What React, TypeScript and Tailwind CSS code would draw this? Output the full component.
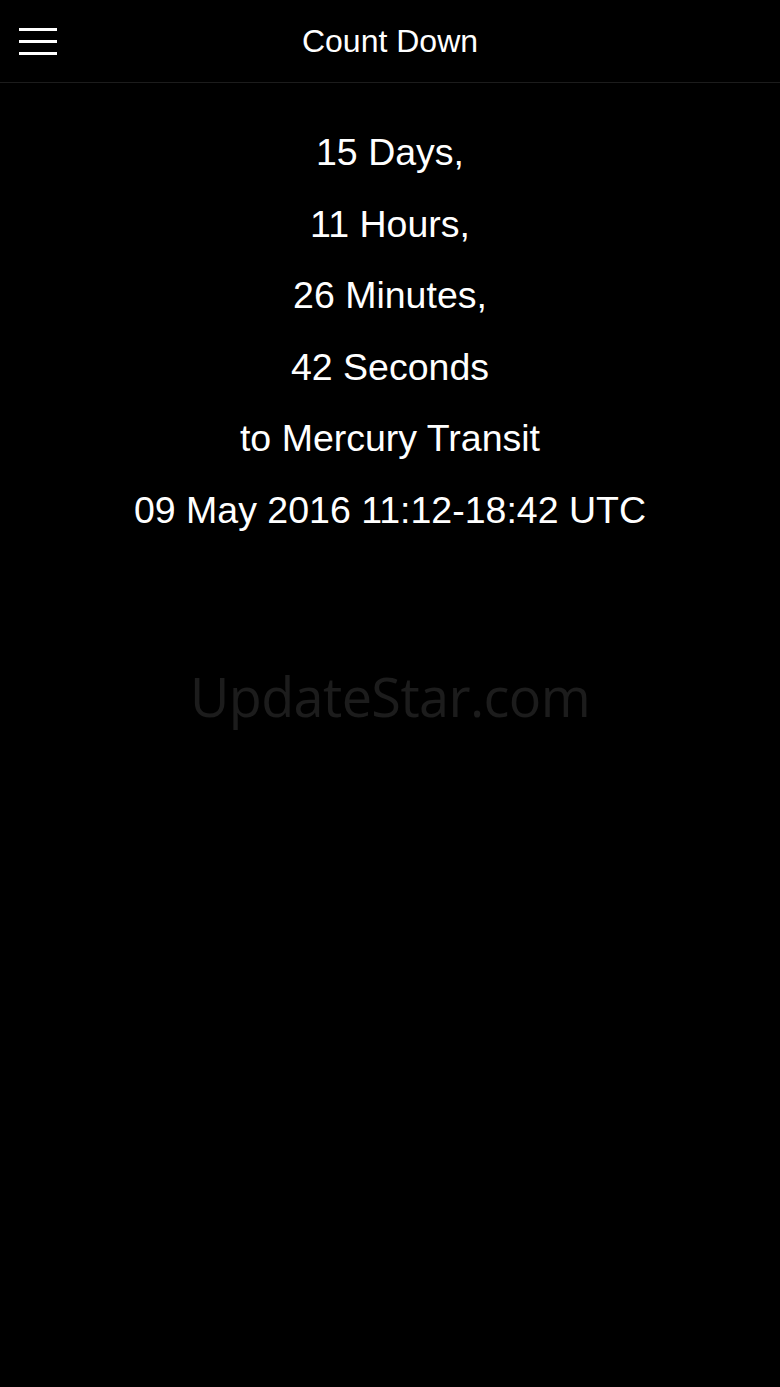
import React from 'react';

const lines = ['15 Days,', '11 Hours,', '26 Minutes,', '42 Seconds', 'to Mercury Transit', '09 May 2016 11:12-18:42 UTC'];

const App: React.FC = () => {
  return (
    <div className="min-h-[1387px] w-full bg-black text-white font-['Liberation_Sans',Arial,sans-serif]">
      <header className="relative h-[83px] flex items-center justify-center border-b border-[#1c1c1c]">
        <button className="absolute left-[19px] top-[28px] w-[38px] flex flex-col gap-[9px]">
          <span className="block h-[3px] bg-white" />
          <span className="block h-[3px] bg-white" />
          <span className="block h-[3px] bg-white" />
        </button>
        <h1 className="text-[32px] leading-none pb-[1px]">Count Down</h1>
      </header>

      <main className="flex flex-col items-center pt-[34px]">
        {lines.map(l => (
          <p key={l} className="text-[37.5px] leading-[71.5px] whitespace-nowrap">{l}</p>
        ))}
        <p className="mt-[123px] text-[#1c1c1c] text-[54px] leading-none font-['Open_Sans',sans-serif] tracking-[-0.6px]">UpdateStar.com</p>
      </main>
    </div>
  );
};

export default App;
